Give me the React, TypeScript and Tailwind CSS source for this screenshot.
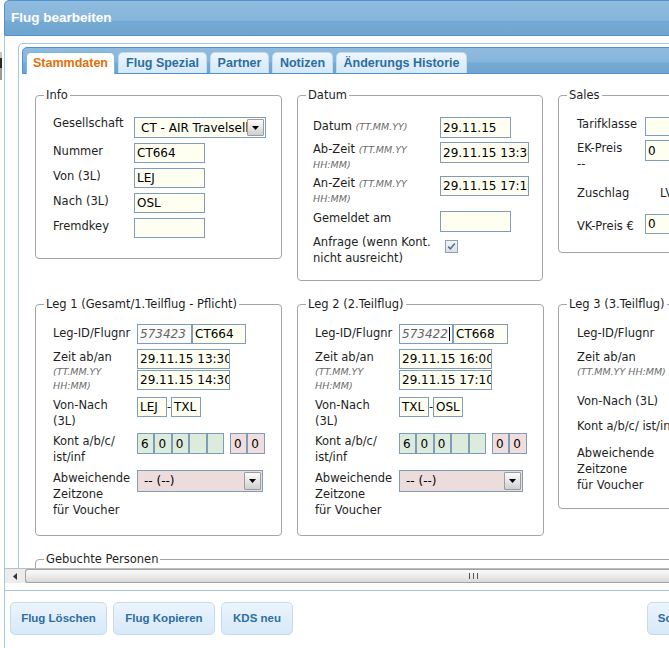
import React from "react";

const font = "font-['DejaVu_Sans',sans-serif]";
const txt = "font-['DejaVu_Sans',sans-serif] text-[11.5px] text-[#1e1e1e]";
const lbl = `${txt} leading-[16px]`;
const lbl15 = `${txt} leading-[15px]`;
const hint = "font-['DejaVu_Sans',sans-serif] italic text-[9.5px] text-[#6b6b6b]";
const uiFont = "font-['Liberation_Sans',Arial,sans-serif] font-bold";

function Box({ cls, children }: { cls: string; children?: React.ReactNode }) {
  return (
    <div
      className={`flex items-center shrink-0 border border-[#7f9db9] pl-[2px] overflow-hidden whitespace-nowrap ${font} text-[12px] ${cls}`}
    >
      {children}
    </div>
  );
}

function DropBtn() {
  return (
    <div className="w-[17px] h-full shrink-0 ml-auto border border-[#9c9c9c] rounded-[1px] bg-[linear-gradient(to_bottom,#fafafa,#e4e4e4_55%,#cfcfcf)] flex items-center justify-center">
      <svg width="7" height="4" viewBox="0 0 7 4">
        <path d="M0 0h7L3.5 4z" fill="#000" />
      </svg>
    </div>
  );
}

function Select({ cls, text }: { cls: string; text: string }) {
  return (
    <div className={`flex items-stretch shrink-0 border border-[#7f9db9] p-[1px] ${cls}`}>
      <div className={`flex items-center pl-[5px] overflow-hidden whitespace-nowrap ${font} text-[12px] text-black flex-1 min-w-0`}>
        {text}
      </div>
      <DropBtn />
    </div>
  );
}

function Fieldset({ legend, cls, children }: { legend: string; cls: string; children?: React.ReactNode }) {
  return (
    <fieldset className={`shrink-0 border border-[#a5a5a5] rounded-[4px] ${cls}`}>
      <legend className={`ml-[8px] px-[2px] ${txt} leading-[13px]`}>{legend}</legend>
      {children}
    </fieldset>
  );
}

const ivory = "bg-[#fefef1] text-black";

function InfoBox() {
  return (
    <Fieldset legend="Info" cls="w-[247px] h-[170px]">
      <div className="pl-[17px] pt-[15px] flex flex-col gap-[5px]">
        <div className="flex items-start">
          <div className={`${lbl} w-[81px] -mt-[2px]`}>Gesellschaft</div>
          <Select cls={`w-[132px] h-[21px] ${ivory}`} text="CT - AIR Travelsell" />
        </div>
        <div className="flex items-start">
          <div className={`${lbl} w-[81px]`}>Nummer</div>
          <Box cls={`w-[71px] h-[20px] ${ivory}`}>CT664</Box>
        </div>
        <div className="flex items-start">
          <div className={`${lbl} w-[81px]`}>Von (3L)</div>
          <Box cls={`w-[71px] h-[20px] ${ivory}`}>LEJ</Box>
        </div>
        <div className="flex items-start">
          <div className={`${lbl} w-[81px]`}>Nach (3L)</div>
          <Box cls={`w-[71px] h-[20px] ${ivory}`}>OSL</Box>
        </div>
        <div className="flex items-start">
          <div className={`${lbl} w-[81px]`}>Fremdkey</div>
          <Box cls={`w-[71px] h-[20px] ${ivory}`} />
        </div>
      </div>
    </Fieldset>
  );
}

function DatumBox() {
  return (
    <Fieldset legend="Datum" cls="w-[246px] h-[192px]">
      <div className="pl-[15px] pt-[15px] flex flex-col">
        <div className="flex items-start">
          <div className={`${lbl} w-[127px] pt-[1px]`}>
            Datum <span className={hint}>(TT.MM.YY)</span>
          </div>
          <Box cls={`w-[71px] h-[21px] ${ivory}`}>29.11.15</Box>
        </div>
        <div className="flex items-start mt-[4px]">
          <div className={`${lbl15} w-[127px] pr-[4px]`}>
            Ab-Zeit <span className={hint}>(TT.MM.YY HH:MM)</span>
          </div>
          <Box cls={`w-[89px] h-[21px] ${ivory}`}>29.11.15 13:30</Box>
        </div>
        <div className="flex items-start mt-[4px]">
          <div className={`${lbl15} w-[127px] pr-[4px]`}>
            An-Zeit <span className={hint}>(TT.MM.YY HH:MM)</span>
          </div>
          <Box cls={`w-[89px] h-[20px] ${ivory}`}>29.11.15 17:10</Box>
        </div>
        <div className="flex items-start mt-[5px]">
          <div className={`${lbl} w-[127px] -mt-[1px]`}>Gemeldet am</div>
          <Box cls={`w-[71px] h-[21px] ${ivory}`} />
        </div>
        <div className="flex items-start mt-[2px]">
          <div className={`${lbl} w-[127px]`}>
            Anfrage (wenn Kont.
            <br />
            nicht ausreicht)
          </div>
          <div className="ml-[5px] mt-[6px] w-[13px] h-[13px] border border-[#8ea2bb] bg-[linear-gradient(to_bottom,#f4f4f4,#dedede)] flex items-center justify-center">
            <svg width="9" height="9" viewBox="0 0 9 9">
              <path d="M1.2 4.6l2.2 2.3L7.8 1.6" fill="none" stroke="#4f6fa3" strokeWidth="1.6" />
            </svg>
          </div>
        </div>
      </div>
    </Fieldset>
  );
}

function SalesBox() {
  return (
    <Fieldset legend="Sales" cls="w-[247px] h-[164px]">
      <div className="pl-[18px] pt-[15px] flex flex-col">
        <div className="flex items-start">
          <div className={`${lbl} w-[68px] -mt-[1px]`}>Tarifklasse</div>
          <Box cls={`w-[70px] h-[19px] ${ivory}`} />
        </div>
        <div className="flex items-start mt-[4px]">
          <div className={`${lbl} w-[68px]`}>
            EK-Preis
            <br />
            --
          </div>
          <Box cls={`w-[70px] h-[21px] ${ivory}`}>0</Box>
        </div>
        <div className="flex items-start mt-[13px]">
          <div className={`${lbl} w-[68px]`}>Zuschlag</div>
          <div className={`${lbl} pl-[15px]`}>LV</div>
        </div>
        <div className="flex items-start mt-[13px]">
          <div className={`${lbl} w-[68px] mt-[4px]`}>VK-Preis €</div>
          <Box cls={`w-[70px] h-[20px] ${ivory}`}>0</Box>
        </div>
      </div>
    </Fieldset>
  );
}

interface LegData {
  legend: string;
  id: string;
  idW: string;
  nrW: string;
  nr: string;
  ab: string;
  an: string;
  von: string;
  nach: string;
  selW: string;
  cursor?: boolean;
}

function LegBox({ d }: { d: LegData }) {
  const green = "w-[17.4px] h-[21px] bg-[#dcebdc] text-black pl-[3px]";
  const red = "w-[17.4px] h-[21px] bg-[#f0dddd] text-black pl-[3px]";
  return (
    <Fieldset legend={d.legend} cls="w-[247px] h-[238px]">
      <div className="pl-[17px] pt-[13px] flex flex-col">
        <div className="flex items-start">
          <div className={`${lbl} w-[79px] mr-[5px] pt-[1px]`}>Leg-ID/Flugnr</div>
          <Box cls={`${d.idW} h-[20px] bg-[#fbfbfb] italic text-[#666]`}>
            {d.id}
            {d.cursor && <span className="w-[1px] h-[14px] bg-black ml-[1px]" />}
          </Box>
          <Box cls={`${d.nrW} h-[20px] ${ivory}`}>{d.nr}</Box>
        </div>
        <div className="flex items-start mt-[5px]">
          <div className="w-[79px] mr-[5px]">
            <div className={lbl}>Zeit ab/an</div>
            <div className={`${hint} leading-[13.5px]`}>(TT.MM.YY HH:MM)</div>
          </div>
          <div className="flex flex-col gap-[1px]">
            <Box cls={`w-[93px] h-[20px] ${ivory}`}>{d.ab}</Box>
            <Box cls={`w-[93px] h-[20px] ${ivory}`}>{d.an}</Box>
          </div>
        </div>
        <div className="flex items-start mt-[5px]">
          <div className={`${lbl} w-[79px] mr-[5px]`}>Von-Nach (3L)</div>
          <div className="flex items-center">
            <Box cls={`w-[30px] h-[20px] ${ivory}`}>{d.von}</Box>
            <span className={`${txt} leading-[10px] w-[4px] text-center`}>-</span>
            <Box cls={`w-[30px] h-[20px] ${ivory}`}>{d.nach}</Box>
          </div>
        </div>
        <div className="flex items-start mt-[4px]">
          <div className={`${lbl} w-[79px] mr-[5px]`}>Kont a/b/c/ ist/inf</div>
          <div className="flex items-start">
            <Box cls={green}>6</Box>
            <Box cls={green}>0</Box>
            <Box cls={green}>0</Box>
            <Box cls={green} />
            <Box cls={green} />
            <div className="w-[6px]" />
            <Box cls={red}>0</Box>
            <Box cls={red}>0</Box>
          </div>
        </div>
        <div className="flex items-start mt-[5px]">
          <div className={`${lbl} w-[79px] mr-[5px]`}>
            Abweichende
            <br />
            Zeitzone
            <br />
            für Voucher
          </div>
          <Select cls={`${d.selW} h-[22px] bg-[#ecdcdc]`} text="-- (--)" />
        </div>
      </div>
    </Fieldset>
  );
}

function Leg3Box() {
  return (
    <Fieldset legend="Leg 3 (3.Teilflug)" cls="w-[247px] h-[211px]">
      <div className="pl-[18px] pt-[14px] flex flex-col whitespace-nowrap">
        <div className={lbl}>Leg-ID/Flugnr</div>
        <div className={`${lbl} mt-[8px]`}>Zeit ab/an</div>
        <div className={`${hint} leading-[13px]`}>(TT.MM.YY HH:MM)</div>
        <div className={`${lbl} mt-[15px]`}>Von-Nach (3L)</div>
        <div className={`${lbl} mt-[9px]`}>Kont a/b/c/ ist/inf</div>
        <div className={`${lbl} mt-[11px]`}>
          Abweichende
          <br />
          Zeitzone
          <br />
          für Voucher
        </div>
      </div>
    </Fieldset>
  );
}

const legs: LegData[] = [
  {
    legend: "Leg 1 (Gesamt/1.Teilflug - Pflicht)",
    id: "573423",
    idW: "w-[55px]",
    nr: "CT664",
    nrW: "w-[54px]",
    ab: "29.11.15 13:30",
    an: "29.11.15 14:30",
    von: "LEJ",
    nach: "TXL",
    selW: "w-[126px]",
  },
  {
    legend: "Leg 2 (2.Teilflug)",
    id: "573422",
    idW: "w-[54px]",
    nr: "CT668",
    nrW: "w-[55px]",
    ab: "29.11.15 16:00",
    an: "29.11.15 17:10",
    von: "TXL",
    nach: "OSL",
    selW: "w-[124px]",
    cursor: true,
  },
];

const tabs = [
  { label: "Stammdaten", w: "w-[89px]", active: true },
  { label: "Flug Spezial", w: "w-[89px]" },
  { label: "Partner", w: "w-[59px]" },
  { label: "Notizen", w: "w-[61px]" },
  { label: "Änderungs Historie", w: "w-[131px]" },
];

const headerBg =
  "bg-[linear-gradient(to_bottom,#8ebbde_0%,#88b6db_55%,#75aad3_60%,#6ea4cf_100%)]";

function TabsWidget() {
  return (
    <div className="w-[820px] border border-[#a6c9e2] rounded-[5px] p-[3px]">
      <div className={`h-[27px] border border-[#4f92cf] rounded-t-[5px] ${headerBg} flex items-end pl-[3px] gap-[3px]`}>
        {tabs.map((t) =>
          t.active ? (
            <div
              key={t.label}
              className={`${t.w} h-[22px] mb-[-1px] rounded-t-[5px] border border-b-0 border-[#79b7e7] bg-white flex items-center justify-center ${uiFont} text-[12.5px] text-[#e17009]`}
            >
              {t.label}
            </div>
          ) : (
            <div
              key={t.label}
              className={`${t.w} h-[21px] rounded-t-[5px] border border-b-0 border-[#c5dbec] bg-[linear-gradient(to_bottom,#eef6fd,#dfeffc_50%,#d6e9f9)] flex items-center justify-center ${uiFont} text-[12.5px] text-[#2e6e9e]`}
            >
              {t.label}
            </div>
          )
        )}
      </div>
      <div className="pt-[15px] pl-[13px] flex flex-col gap-[17px]">
        <div className="flex items-start gap-[15px]">
          <InfoBox />
          <DatumBox />
          <SalesBox />
        </div>
        <div className="flex items-start gap-[15px]">
          <LegBox d={legs[0]} />
          <div className="w-[246px] shrink-0">
            <LegBox d={legs[1]} />
          </div>
          <Leg3Box />
        </div>
        <Fieldset legend="Gebuchte Personen" cls="w-[770px] h-[120px]" />
      </div>
    </div>
  );
}

function HScrollbar() {
  return (
    <div className="h-[15px] shrink-0 flex bg-[#ececec] border-t border-[#bdbdbd]">
      <div className="w-[20px] flex items-center justify-center">
        <svg width="4" height="7" viewBox="0 0 4 7">
          <path d="M4 0v7L0 3.5z" fill="#333" />
        </svg>
      </div>
      <div className="flex-1 rounded-l-[3px] border border-r-0 border-[#a2a2a2] bg-[linear-gradient(to_bottom,#fbfbfb,#ececec_50%,#d9d9d9)] flex items-center">
        <div className="ml-[443px] flex gap-[3px]">
          <div className="w-[1px] h-[6px] bg-[#555]" />
          <div className="w-[1px] h-[6px] bg-[#555]" />
          <div className="w-[1px] h-[6px] bg-[#555]" />
        </div>
      </div>
    </div>
  );
}

function Btn({ w, children }: { w: string; children: React.ReactNode }) {
  return (
    <div
      className={`${w} h-[33px] rounded-[5px] border border-[#c5dbec] bg-[linear-gradient(to_bottom,#edf5fd,#e0eefb_50%,#d7e9f8)] flex items-center justify-center ${uiFont} text-[11.5px] text-[#2e6e9e]`}
    >
      {children}
    </div>
  );
}

export default function App() {
  return (
    <div className="w-[669px] h-[648px] overflow-hidden bg-white flex">
      {/* page background peeking out at the left */}
      <div className="w-[4px] shrink-0 flex flex-col">
        <div className="h-[52px]" />
        <div className="w-[2px] h-[6px] bg-[#c4c4c4]" />
        <div className="w-[2px] h-[10px] bg-[#2a2a2a]" />
        <div className="w-[2px] h-[12px] bg-[#9a9a9a]" />
      </div>
      <div className="w-[740px] shrink-0 flex flex-col">
        <div
          className={`h-[36px] shrink-0 rounded-tl-[5px] border border-[#4f92cf] ${headerBg} flex items-center pl-[6px] ${uiFont} text-[13.5px] text-white`}
        >
          Flug bearbeiten
        </div>
        <div className="flex-1 flex flex-col border-l border-[#a6c9e2] min-h-0">
          <div className="h-[532px] shrink-0 overflow-hidden pl-[13px] pt-[7px]">
            <TabsWidget />
          </div>
          <HScrollbar />
          <div className="h-[7px] shrink-0" />
          <div className="flex-1 border-t border-[#a6c9e2] bg-white flex justify-between items-start pt-[11px] pl-[5px] pr-[21px]">
            <div className="flex gap-[6px]">
              <Btn w="w-[97px]">Flug Löschen</Btn>
              <Btn w="w-[102px]">Flug Kopieren</Btn>
              <Btn w="w-[72px]">KDS neu</Btn>
            </div>
            <Btn w="w-[76px]">Schließen</Btn>
          </div>
        </div>
      </div>
    </div>
  );
}
